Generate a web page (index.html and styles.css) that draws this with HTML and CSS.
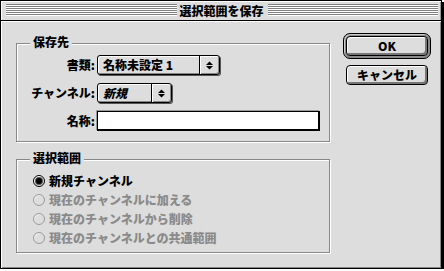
FILE: index.html
```html
<!DOCTYPE html>
<html lang="ja">
<head>
    <meta charset="UTF-8">
    <title>選択範囲を保存</title>
    <link rel="stylesheet" href="styles.css">
</head>
<body>
    <div class="window">
        <!-- title bar -->
        <div class="titlebar">
            <div class="stripes"></div>
            <span class="title">選択範囲を保存</span>
            <div class="stripes"></div>
        </div>

        <div class="content">
            <div class="groups">
                <div class="group group-dest">
                    <span class="legend">保存先</span>
                    <div class="form">
                        <label class="label">書類:</label>
                        <div class="popup popup-doc">
                            <span class="popup-text">名称未設定 1</span>
                            <span class="popup-arrow">
                                <svg width="7" height="9" viewBox="0 0 7 9"><polygon points="0,4 3.5,0.5 7,4" /><polygon points="0,5 3.5,8.5 7,5" /></svg>
                            </span>
                        </div>

                        <label class="label">チャンネル:</label>
                        <div class="popup popup-channel">
                            <span class="popup-text italic">新規</span>
                            <span class="popup-arrow">
                                <svg width="7" height="9" viewBox="0 0 7 9"><polygon points="0,4 3.5,0.5 7,4" /><polygon points="0,5 3.5,8.5 7,5" /></svg>
                            </span>
                        </div>

                        <label class="label">名称:</label>
                        <div class="field"></div>
                    </div>
                </div>

                <div class="group group-sel">
                    <span class="legend">選択範囲</span>
                    <div class="radio checked"><span class="circle"></span>新規チャンネル</div>
                    <div class="radio disabled"><span class="circle"></span>現在のチャンネルに加える</div>
                    <div class="radio disabled"><span class="circle"></span>現在のチャンネルから削除</div>
                    <div class="radio disabled"><span class="circle"></span>現在のチャンネルとの共通範囲</div>
                </div>
            </div>

            <div class="buttons">
                <div class="default-ring"><div class="btn">OK</div></div>
                <div class="btn">キャンセル</div>
            </div>
        </div>
    </div>
</body>
</html>
```

FILE: styles.css
```css
body {
    margin: 0;
    background-color: #ffffff;
    font-family: "Noto Sans CJK JP", "DejaVu Sans", sans-serif;
    font-size: 12px;
    font-weight: 900;
    color: #000000;
}
.window {
    width: 440px;
    height: 267px;
    border: 1px solid #000000;
    box-shadow: 2px 2px 0 #000000;
    background-color: #dddddd;
    display: flex;
    flex-direction: column;
}
/* title bar */
.titlebar {
    height: 20px;
    border-bottom: 1px solid #000000;
    display: flex;
    align-items: flex-start;
    padding: 3px 3px 0 5px;
    box-sizing: border-box;
    box-shadow: inset 1px 1px 0 #ffffff, inset -1px 0 0 #999999;
}
.stripes {
    flex: 1;
    height: 12px;
    background: repeating-linear-gradient(to bottom, #808080 0, #808080 1px, #ffffff 1px, #ffffff 2px);
}
.title {
    padding: 0 4px 0 3px;
    line-height: 13px;
    font-size: 12px;
}
.content {
    flex: 1;
    display: flex;
    padding-left: 15px;
    box-shadow: inset 1px 1px 0 #ffffff, inset -1px -1px 0 #888888;
}
/* group boxes */
.groups {
    margin-top: 22px;
    width: 314px;
}
.group {
    position: relative;
    border: 1px solid #888888;
    box-shadow: 1px 1px 0 #ffffff, inset 1px 1px 0 #ffffff;
    box-sizing: border-box;
}
.legend {
    position: absolute;
    left: 13px;
    top: -9px;
    padding: 0 3px;
    line-height: 14px;
    background-color: #dddddd;
}
.group-dest {
    height: 99px;
    padding-top: 11px;
}
.group-sel {
    margin-top: 17px;
    height: 94px;
    padding: 11px 0 0 16px;
}
.form {
    display: grid;
    grid-template-columns: 78px auto;
    grid-auto-rows: 20px;
    column-gap: 2px;
    row-gap: 8px;
    align-items: center;
}
.label {
    text-align: right;
    line-height: 14px;
}
/* popup menus */
.popup {
    height: 20px;
    box-sizing: border-box;
    border: 1px solid #000000;
    border-radius: 3px;
    box-shadow: inset 1px 1px 0 #ffffff, inset -1px -1px 0 #888888, 1px 1px 0 #555555;
    display: flex;
    align-items: center;
    justify-self: start;
}
.popup-doc {
    width: 123px;
}
.popup-channel {
    width: 75px;
}
.popup-text {
    flex: 1;
    padding-left: 5px;
    line-height: 14px;
}
.italic {
    font-style: italic;
}
.popup-arrow {
    width: 19px;
    height: 18px;
    border-left: 1px solid #000000;
    box-shadow: inset 1px 0 0 #ffffff;
    display: flex;
    align-items: center;
    justify-content: center;
}
.popup-arrow svg {
    fill: #000000;
}
.field {
    width: 223px;
    height: 20px;
    box-sizing: border-box;
    border: 1px solid #000000;
    border-right-width: 2px;
    border-bottom-width: 2px;
    background-color: #ffffff;
    box-shadow: -1px -1px 0 #999999;
}
/* radio buttons */
.radio {
    height: 19px;
    display: flex;
    align-items: center;
    gap: 4px;
    line-height: 14px;
}
.circle {
    width: 12px;
    height: 12px;
    box-sizing: border-box;
    border-radius: 50%;
    border: 1px solid #000000;
    background-color: #dddddd;
    box-shadow: inset 1px 1px 0 #ffffff;
    display: flex;
    align-items: center;
    justify-content: center;
}
.checked .circle::after {
    content: "";
    width: 6px;
    height: 6px;
    border-radius: 50%;
    background-color: #000000;
    box-shadow: 0 0 0 1px #555555;
}
.disabled {
    color: #8a8a8a;
}
.disabled .circle {
    border-color: #9a9a9a;
    box-shadow: inset 1px 1px 0 #eeeeee;
}
/* push buttons */
.buttons {
    margin-top: 12px;
    margin-left: 13px;
    width: 88px;
    display: flex;
    flex-direction: column;
    align-items: center;
    gap: 6px;
}
.default-ring {
    width: 88px;
    height: 26px;
    box-sizing: border-box;
    border: 1px solid #000000;
    border-radius: 7px;
    padding: 2px;
    background-color: #8a8a8a;
    box-shadow: inset 1px 1px 0 #cccccc;
}
.btn {
    width: 82px;
    height: 20px;
    box-sizing: border-box;
    border: 1px solid #000000;
    border-radius: 4px;
    background-color: #dddddd;
    box-shadow: inset 1px 1px 0 #ffffff, inset -2px -2px 0 #777777;
    text-align: center;
    line-height: 17px;
}
```
